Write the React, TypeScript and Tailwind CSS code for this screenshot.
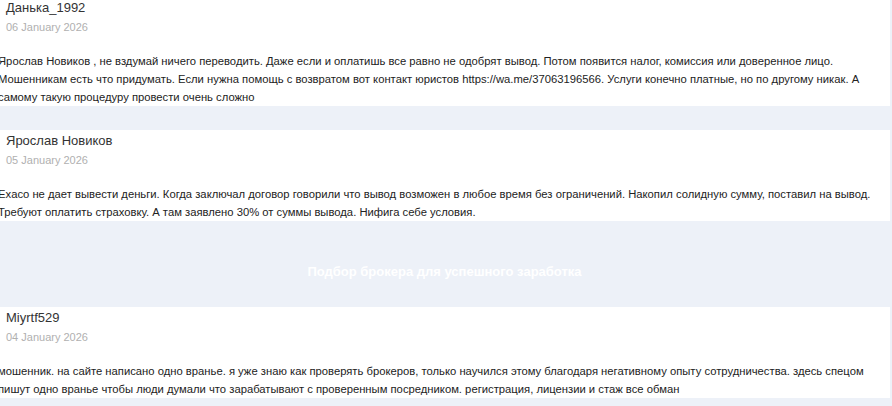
const REVIEWS = [
  {
    author: "Данька_1992",
    date: "06 January 2026",
    text: "Ярослав Новиков , не вздумай ничего переводить. Даже если и оплатишь все равно не одобрят вывод. Потом появится налог, комиссия или доверенное лицо. Мошенникам есть что придумать. Если нужна помощь с возвратом вот контакт юристов https://wa.me/37063196566. Услуги конечно платные, но по другому никак. А самому такую процедуру провести очень сложно",
  },
  {
    author: "Ярослав Новиков",
    date: "05 January 2026",
    text: "Exaco не дает вывести деньги. Когда заключал договор говорили что вывод возможен в любое время без ограничений. Накопил солидную сумму, поставил на вывод. Требуют оплатить страховку. А там заявлено 30% от суммы вывода. Нифига себе условия.",
  },
  {
    author: "Miyrtf529",
    date: "04 January 2026",
    text: "мошенник. на сайте написано одно вранье. я уже знаю как проверять брокеров, только научился этому благодаря негативному опыту сотрудничества. здесь спецом пишут одно вранье чтобы люди думали что зарабатывают с проверенным посредником. регистрация, лицензии и стаж все обман",
  },
];

type Review = (typeof REVIEWS)[number];

function ReviewCard({ review }: { review: Review }) {
  return (
    <div className="bg-white pt-[3px] pr-[12px]">
      <div className="pl-[7px]">
        <div className="text-[13px] leading-[16px] text-[#333]">{review.author}</div>
        <div className="mt-[4px] text-[11px] leading-[14px] text-[#b0b0b0]">{review.date}</div>
      </div>
      <p className="mt-[18px] -ml-[1px] text-[11.25px] leading-[18px] text-[#222]">{review.text}</p>
    </div>
  );
}

function BrokerBanner() {
  return (
    <div className="h-[86px] pt-[43px] text-center text-[13px] font-bold leading-[16px] text-white">
      Подбор брокера для успешного заработка
    </div>
  );
}

export default function App() {
  return (
    <div className="h-[406px] w-[892px] overflow-hidden bg-[#edf1f8] font-['Liberation_Sans',Arial,sans-serif]">
      <div className="-mt-[3px] -ml-[1px] flex w-[891px] flex-col">
        <ReviewCard review={REVIEWS[0]} />
        <div className="h-[24px]" />
        <ReviewCard review={REVIEWS[1]} />
        <BrokerBanner />
        <ReviewCard review={REVIEWS[2]} />
      </div>
    </div>
  );
}
